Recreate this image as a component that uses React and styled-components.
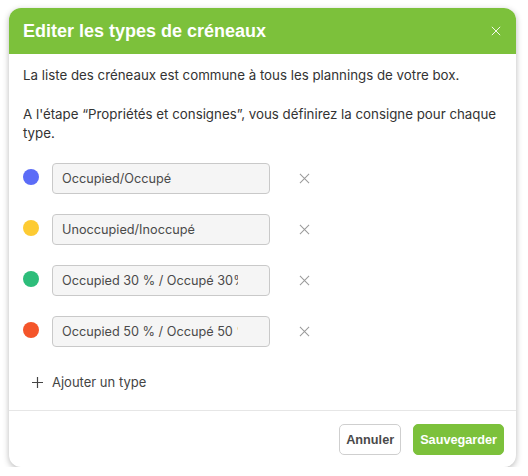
import React from 'react'
import styled, { createGlobalStyle } from 'styled-components'

const GlobalStyle = createGlobalStyle`
  body {
    margin: 0;
    background: #ffffff;
    font-family: Inter, "Noto Sans", sans-serif;
  }
`;

const types = [
  { color: '#5b6cf7', label: 'Occupied/Occupé' },
  { color: '#fdcb33', label: 'Unoccupied/Inoccupé' },
  { color: '#2dbd7a', label: 'Occupied 30 % / Occupé 30%' },
  { color: '#f4552a', label: 'Occupied 50 % / Occupé 50 %' },
];

const CloseIcon = ({ size = 12, color = '#fff', width = 1.2 }) => (
  <svg width={size} height={size} viewBox="0 0 12 12">
    <path d="M1 1 L11 11 M11 1 L1 11" stroke={color} strokeWidth={width} fill="none" />
  </svg>
);

const PlusIcon = () => (
  <svg width="11" height="11" viewBox="0 0 11 11">
    <path d="M5.5 0 V11 M0 5.5 H11" stroke="#444" strokeWidth="1.2" fill="none" />
  </svg>
);

const App = () => {
  return (
    <>
      <GlobalStyle />
      <Page>
        <Modal>
          <Header>
            <Title>Editer les types de créneaux</Title>
            <HeaderClose aria-label="Fermer">
              <CloseIcon size={10} />
            </HeaderClose>
          </Header>
          <Body>
            <Text>La liste des créneaux est commune à tous les plannings de votre box.</Text>
            <Text>A l'étape “Propriétés et consignes”, vous définirez la consigne pour chaque type.</Text>
            <List>
              {types.map((t) => (
                <Row key={t.label}>
                  <Dot color={t.color} />
                  <Field type="text" defaultValue={t.label} />
                  <RemoveButton aria-label="Supprimer">
                    <CloseIcon size={11} color="#9a9a9a" width={1.1} />
                  </RemoveButton>
                </Row>
              ))}
            </List>
            <AddButton>
              <PlusIcon />
              Ajouter un type
            </AddButton>
          </Body>
          <Footer>
            <Button>Annuler</Button>
            <Button primary>Sauvegarder</Button>
          </Footer>
        </Modal>
      </Page>
    </>
  )
}

export default App

const Page = styled.div`
  padding: 8px 12px 0 9px;
`;

const Modal = styled.div`
  width: 507px;
  background: #fff;
  border-radius: 12px;
  box-shadow: 0 2px 6px rgba(0, 0, 0, 0.28);
  overflow: hidden;
`;

const Header = styled.div`
  height: 46px;
  background: #7cc13b;
  display: flex;
  align-items: center;
  justify-content: space-between;
  padding: 0 15px 0 14px;
`;

const Title = styled.h1`
  margin: 0;
  color: #fff;
  font-family: "Liberation Sans", Arial, sans-serif;
  font-weight: 700;
  font-size: 18px;
`;

const HeaderClose = styled.button`
  border: 0;
  background: none;
  padding: 0;
  display: flex;
  opacity: 0.9;
`;

const Body = styled.div`
  padding: 12px 14px 18px 14px;
  border-bottom: 1px solid #e6e6e6;
`;

const Text = styled.p`
  margin: 0 0 20px;
  font-size: 13.3px;
  line-height: 19px;
  color: #333;
`;

const List = styled.div`
  display: flex;
  flex-direction: column;
  gap: 20px;
`;

const Row = styled.div`
  display: flex;
  align-items: center;
`;

const Dot = styled.span`
  width: 16px;
  height: 16px;
  border-radius: 50%;
  background: ${props => props.color};
  margin-right: 13px;
  margin-top: -3px;
  flex: none;
`;

const Field = styled.input`
  box-sizing: border-box;
  width: 218px;
  height: 31px;
  padding: 0 31px 0 9px;
  border: 1px solid #c9c9c9;
  border-radius: 4px;
  background: #f5f5f5;
  font-family: Inter, "Noto Sans", sans-serif;
  font-size: 12.7px;
  color: #4a4a4a;
  outline: none;
`;

const RemoveButton = styled.button`
  border: 0;
  background: none;
  padding: 0;
  margin-left: 29px;
  display: flex;
`;

const AddButton = styled.button`
  margin-top: 25px;
  margin-left: 9px;
  height: 20px;
  border: 0;
  background: none;
  padding: 0;
  display: flex;
  align-items: center;
  gap: 9px;
  font-family: Inter, "Noto Sans", sans-serif;
  font-size: 13px;
  color: #444;
`;

const Footer = styled.div`
  display: flex;
  justify-content: flex-end;
  gap: 12px;
  padding: 13px 12px 12px;
`;

const Button = styled.button`
  height: 31px;
  padding: 0 6px;
  border-radius: 5px;
  border: 1px solid ${props => props.primary ? '#7cc13b' : '#cfcfcf'};
  background: ${props => props.primary ? '#7cc13b' : '#fff'};
  color: ${props => props.primary ? '#fff' : '#4a4a4a'};
  font-family: "Liberation Sans", Arial, sans-serif;
  font-weight: 700;
  font-size: 12.7px;
`;
